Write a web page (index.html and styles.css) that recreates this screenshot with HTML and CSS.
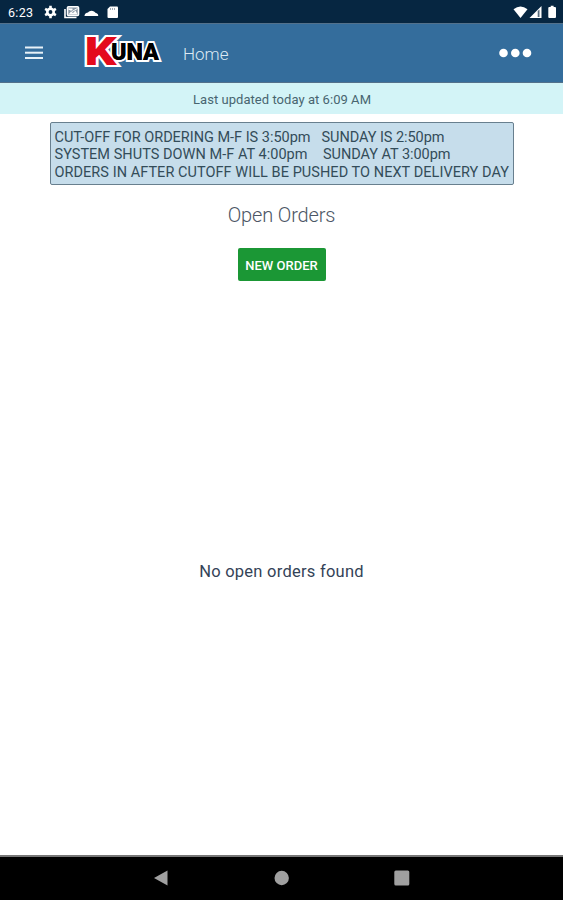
FILE: index.html
```html
<!DOCTYPE html>
<html lang="en">
<head>
    <meta charset="UTF-8">
    <meta name="viewport" content="width=device-width, initial-scale=1.0">
    <title>Kuna - Home</title>
    <link rel="stylesheet" href="styles.css">
</head>
<body>
    <div class="status-bar">
        <span class="clock">6:23</span>
        <svg class="status-left" width="76" height="16" viewBox="0 0 76 16" fill="#fff">
            <!-- settings -->
            <circle cx="6.500" cy="8" r="3.200" fill="none" stroke="#fff" stroke-width="2.600"/>
            <path d="M6.500 1.800v3M6.500 11.200v3M1.100 4.900l2.600 1.500M9.300 9.600l2.600 1.500M1.100 11.100l2.600-1.500M9.300 6.400l2.600-1.500" stroke="#fff" stroke-width="2.600"/>
            <!-- pictures -->
            <path d="M21 5v8.500h11.500" fill="none" stroke="#fff" stroke-width="1.600"/>
            <rect x="23.500" y="2.700" width="11" height="8.800" rx="1" fill="#8795a3" stroke="#fff" stroke-width="1.600"/>
            <path d="M24.500 10.500l2.500-3 2 1.500 2.500-2.500 2 4zM24.500 4.500h4v1.500h-4z"/>
            <path d="M25 4.500l3 3 5.500-3" fill="none" stroke="#fff" stroke-width="1"/>
            <!-- cloud -->
            <path d="M41 12a.5.5 0 0 1-.5-.6C41 9.500 42.500 9 44 8.600 45.500 6.500 48 6 50 7.600c1 .9 1.700 1.500 3 2 1 .5 1.300 1.300 1.200 2.400z"/>
            <!-- sd card -->
            <path d="M66 2.500h7a1 1 0 0 1 1 1v9.500a1 1 0 0 1-1 1h-8.500a1 1 0 0 1-1-1V5z"/>
            <path d="M66.500 4v2M68.500 4v2M70.500 4v2" stroke="#8795a3" stroke-width=".8"/>
        </svg>
        <svg class="status-right" width="46" height="16" viewBox="0 0 46 16" fill="#fff">
            <path d="M.5 5.300Q7.500-.2 14.500 5.300L7.500 14z"/>
            <path d="M28.500 2v12h-12z"/>
            <path d="M24.700 7v6h1.800V5.500z" fill="#566a7c"/>
            <path d="M36.300 3h1.400V1.800h2.900V3H42a1 1 0 0 1 1 1v9a1 1 0 0 1-1 1h-5.700a1 1 0 0 1-1-1V4a1 1 0 0 1 1-1z"/>
        </svg>
    </div>

    <div class="header">
        <svg class="menu" width="18" height="14" viewBox="0 0 18 14" fill="#e8f2f8">
            <rect y="0.5" width="18" height="2"/>
            <rect y="5.7" width="18" height="2"/>
            <rect y="11" width="18" height="2"/>
        </svg>
        <svg class="logo" width="80" height="38" viewBox="0 0 80 38">
            <text class="logo-una" x="28" y="26" textLength="48" lengthAdjust="spacingAndGlyphs">UNA</text>
            <text class="logo-k" x="1.500" y="31" textLength="32" lengthAdjust="spacingAndGlyphs">K</text>
            <!-- lower edge of the U sits over the K outline -->
            <text class="logo-una front" x="28" y="26" textLength="48" lengthAdjust="spacingAndGlyphs" aria-hidden="true">UNA</text>
        </svg>
        <span class="title">Home</span>
        <svg class="more" width="34" height="10" viewBox="0 0 34 10" fill="#fff">
            <circle cx="4.500" cy="5" r="4.300"/>
            <circle cx="16.300" cy="5" r="4.300"/>
            <circle cx="28" cy="5" r="4.300"/>
        </svg>
    </div>

    <div class="updated"><svg width="180" height="20"><text x="1" y="14.500" textLength="178">Last updated today at 6:09 AM</text></svg></div>

    <div class="content">
        <div class="notice">
            <svg width="458" height="54">
                <text x="0.500" y="13.500" textLength="256">CUT-OFF FOR ORDERING M-F IS 3:50pm</text>
                <text x="267.500" y="13.500" textLength="123">SUNDAY IS 2:50pm</text>
                <text x="0.500" y="31" textLength="253">SYSTEM SHUTS DOWN M-F AT 4:00pm</text>
                <text x="269" y="31" textLength="127.500">SUNDAY AT 3:00pm</text>
                <text x="0.500" y="48.500" textLength="454.500">ORDERS IN AFTER CUTOFF WILL BE PUSHED TO NEXT DELIVERY DAY</text>
            </svg>
        </div>
        <h1>Open Orders</h1>
        <button class="button">NEW ORDER</button>
        <p class="empty">No open orders found</p>
    </div>

    <div class="nav-bar">
        <svg width="16" height="16" viewBox="0 0 16 16"><path d="M0 8L13.500.5v15z"/></svg>
        <svg width="16" height="16" viewBox="0 0 16 16"><circle cx="7.700" cy="8" r="7.200"/></svg>
        <svg width="16" height="16" viewBox="0 0 16 16"><rect x=".3" y=".5" width="15" height="15" rx="1.500"/></svg>
    </div>
</body>
</html>
```
FILE: styles.css
```css
* {
    box-sizing: border-box;
}
body {
    margin: 0;
    height: 900px;
    display: flex;
    flex-direction: column;
    overflow: hidden;
    background: #fff;
    font-family: Roboto, sans-serif;
}
svg {
    display: block;
    flex: none;
}
.status-bar {
    height: 23px;
    padding: 1px 4px 0 8px;
    display: flex;
    align-items: center;
    background: #062641;
    color: #fff;
}
.clock {
    width: 36px;
    font-size: 12.5px;
    letter-spacing: 0.3px;
}
.status-right {
    margin-left: auto;
}
.header {
    height: 60px;
    padding: 0 30px 0 25px;
    display: flex;
    align-items: center;
    background: #346d9c;
    border: 1px solid #53718b;
    border-width: 1px 0;
}
.logo {
    margin-left: 40px;
    overflow: visible;
}
.logo text {
    font-family: Roboto, sans-serif;
    font-weight: 900;
    stroke: #fff;
    stroke-width: 4px;
    stroke-linejoin: miter;
    paint-order: stroke;
}
.logo .logo-k {
    font-size: 38px;
    fill: #e40a1c;
}
.logo .logo-una {
    font-size: 23.5px;
    fill: #000;
}
.logo .front {
    stroke: none;
}
.title {
    margin: 1px 0 0 20px;
    color: #dce9f3;
    font-size: 17px;
    font-weight: 300;
}
.more {
    margin-left: auto;
}
.updated {
    height: 31px;
    padding-top: 6px;
    display: flex;
    justify-content: center;
    background: #d3f4f7;
}
.updated text {
    font-size: 13px;
    fill: #486570;
}
.content {
    flex: 1;
    padding-top: 8px;
    display: flex;
    flex-direction: column;
    align-items: center;
}
.notice {
    width: 464px;
    height: 63px;
    padding: 5px 3px;
    background: #c6ddeb;
    border: 1px solid #687f8e;
    border-radius: 2px;
}
.notice text {
    font-size: 14.5px;
    fill: #334c59;
}
h1 {
    margin: 18px 0 0;
    color: #4c5665;
    font-size: 20px;
    font-weight: 300;
    line-height: 24px;
    letter-spacing: -0.15px;
}
.button {
    width: 88px;
    height: 33px;
    margin-top: 21px;
    padding: 1px 0 0;
    background: #1b9735;
    color: #fff;
    border: none;
    border-radius: 2px;
    font: 500 13px Roboto, sans-serif;
    white-space: nowrap;
}
.empty {
    margin: 281px 0 0;
    color: #344357;
    font-size: 16.5px;
    line-height: 20px;
    letter-spacing: 0.25px;
}
.nav-bar {
    height: 45px;
    padding-bottom: 2px;
    display: flex;
    align-items: center;
    justify-content: center;
    gap: 104px;
    background: #000;
    border-top: 2px solid #777;
    fill: #a0a0a0;
}
```
